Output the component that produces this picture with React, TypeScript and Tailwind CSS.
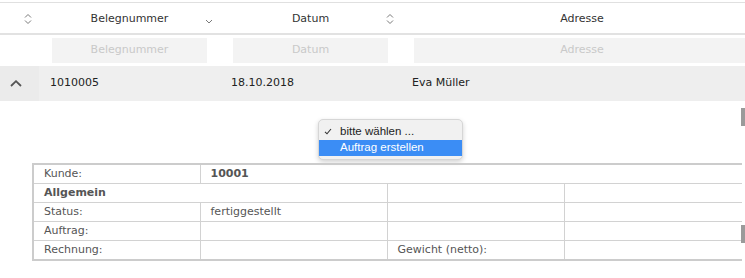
function SortIcon() {
  return (
    <svg width="8" height="12" viewBox="0 0 8 12" fill="none" stroke="#7a7a7a" strokeWidth="1">
      <path d="M1 4.5 L4 1.5 L7 4.5" />
      <path d="M1 7.5 L4 10.5 L7 7.5" />
    </svg>
  );
}

function DownIcon() {
  return (
    <svg width="8" height="12" viewBox="0 0 8 12" fill="none" stroke="#7a7a7a" strokeWidth="1">
      <path d="M1 7 L4 10 L7 7" />
    </svg>
  );
}

function HeaderCell({ w, label, icon }: { w: string; label?: string; icon?: React.ReactNode }) {
  return (
    <div className={`${w} shrink-0 grid grid-cols-[1fr_auto_1fr] items-center pt-[2px]`}>
      <span />
      <span className="text-[#333]">{label}</span>
      <span className="justify-self-end pr-[7px] flex items-center">{icon}</span>
    </div>
  );
}

const rows = [
  { a: 'Kunde:', b: '10001', bold: true, span: true },
  { a: 'Allgemein', head: true },
  { a: 'Status:', b: 'fertiggestellt' },
  { a: 'Auftrag:' },
  { a: 'Rechnung:', c: 'Gewicht (netto):' },
];

export default function App() {
  return (
    <div className="relative w-[745px] h-[278px] overflow-hidden bg-white font-['DejaVu_Sans',sans-serif] text-[11px]">
      <div className="mt-[2px] border-t border-[#e0e0e0]" />

      {/* header */}
      <div className="flex h-[32px] border-b-2 border-[#e2e2e2]">
        <HeaderCell w="w-[39px]" icon={<SortIcon />} />
        <HeaderCell w="w-[181px]" label="Belegnummer" icon={<DownIcon />} />
        <HeaderCell w="w-[181px]" label="Datum" icon={<SortIcon />} />
        <HeaderCell w="w-[362px]" label="Adresse" />
      </div>

      {/* filter */}
      <div className="flex mt-[3px] h-[25px]">
        <div className="w-[39px] shrink-0" />
        <div className="w-[181px] shrink-0 px-[13px]">
          <div className="h-full bg-[#f3f3f3] flex items-center justify-center text-[#c9c9c9]">Belegnummer</div>
        </div>
        <div className="w-[181px] shrink-0 px-[13px]">
          <div className="h-full bg-[#f3f3f3] flex items-center justify-center text-[#c9c9c9]">Datum</div>
        </div>
        <div className="w-[362px] shrink-0 px-[13px]">
          <div className="h-full bg-[#f3f3f3] flex items-center justify-center text-[#c9c9c9]">Adresse</div>
        </div>
      </div>

      {/* data row */}
      <div className="flex mt-[3px] h-[35px] text-[#222]">
        <div className="w-[39px] shrink-0 bg-[#ebebeb] flex items-center pl-[10px]">
          <svg width="12" height="7" viewBox="0 0 12 7" fill="none" stroke="#555" strokeWidth="1.8">
            <path d="M1 6 L6 1.2 L11 6" />
          </svg>
        </div>
        <div className="w-[181px] shrink-0 bg-[#efefef] flex items-center pl-[11px]">1010005</div>
        <div className="w-[181px] shrink-0 bg-[#eeeeee] flex items-center pl-[11px]">18.10.2018</div>
        <div className="w-[362px] shrink-0 bg-[#eeeeee] flex items-center pl-[11px]">Eva Müller</div>
      </div>

      {/* expanded area with open select */}
      <div className="h-[62px] pl-[318px] pt-[18px]">
        <div className="w-[145px] rounded-[5px] bg-[#f1f1f1] border border-[#d6d6d6] shadow-[0_2px_5px_rgba(0,0,0,0.18)] py-[3px] font-['Liberation_Sans',sans-serif] text-[11.5px] text-[#222]">
          <div className="h-[17px] flex items-center">
            <span className="w-[21px] pl-[5px] flex items-center">
              <svg width="8" height="7" viewBox="0 0 8 7" fill="none" stroke="#333" strokeWidth="1.1">
                <path d="M1 3.8 L3 5.8 L7 1" />
              </svg>
            </span>
            bitte wählen ...
          </div>
          <div className="h-[16px] flex items-center bg-[#3b8df5] text-white pl-[21px]">Auftrag erstellen</div>
        </div>
      </div>

      {/* detail table */}
      <table className="ml-[32px] w-[709px] table-fixed border-collapse border-t-2 border-b-2 border-l-2 border-[#cccccc] text-[#555]">
        <colgroup>
          <col className="w-[167px]" />
          <col className="w-[187px]" />
          <col className="w-[177px]" />
          <col className="w-[178px]" />
        </colgroup>
        <tbody>
          {rows.map((r, i) => {
            const td = 'h-[19px] border border-[#d2d2d2] pl-[10px] py-0 leading-[18px] align-middle';
            if (r.span) {
              return (
                <tr key={i}>
                  <td className={td}>{r.a}</td>
                  <td className={`${td} border-r-0 font-bold`} colSpan={3}>{r.b}</td>
                </tr>
              );
            }
            if (r.head) {
              return (
                <tr key={i}>
                  <td className={`${td} font-bold`} colSpan={2}>{r.a}</td>
                  <td className={td} />
                  <td className={`${td} border-r-0`} />
                </tr>
              );
            }
            return (
              <tr key={i}>
                <td className={td}>{r.a}</td>
                <td className={td}>{r.b}</td>
                <td className={td}>{r.c}</td>
                <td className={`${td} border-r-0`} />
              </tr>
            );
          })}
        </tbody>
      </table>

      {/* scrollbar thumbs */}
      <div className="absolute left-[741px] top-[108px] w-[4px] h-[18px] bg-[#9a9a9a]" />
      <div className="absolute left-[741px] top-[225px] w-[4px] h-[18px] bg-[#9a9a9a]" />
    </div>
  );
}
